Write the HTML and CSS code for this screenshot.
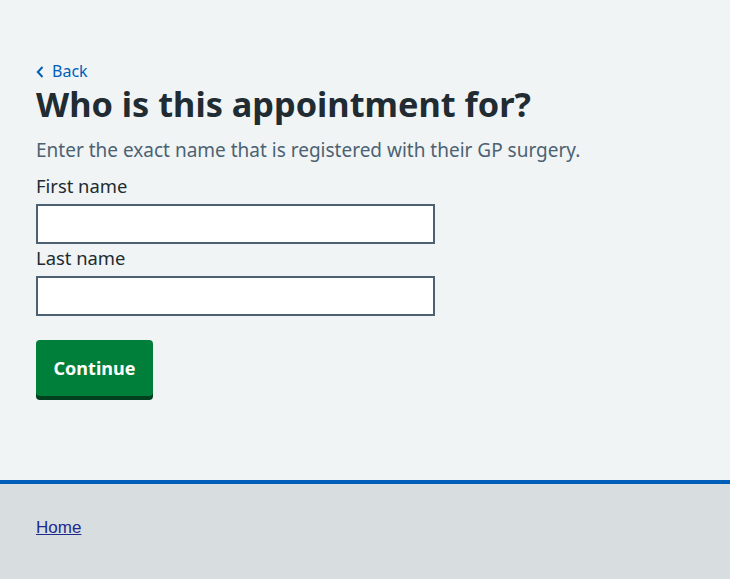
FILE: index.html
```html
<!DOCTYPE html>
<html lang="en">
<head>
<meta charset="utf-8">
<title>Who is this appointment for?</title>
<link rel="stylesheet" href="styles.css">
</head>
<body>
<div class="page">
  <main class="main">
    <a class="back-link" href="#">
      <svg class="back-icon" viewBox="0 0 8 12" width="8" height="12" aria-hidden="true"><path d="M6.5 1 L1.8 6 L6.5 11" fill="none" stroke="#005eb8" stroke-width="2"/></svg>
      <span>Back</span>
    </a>
    <h1 class="heading">Who is this appointment for?</h1>
    <p class="hint">Enter the exact name that is registered with their GP surgery.</p>
    <form class="form">
      <div class="field">
        <label class="label" for="first">First name</label>
        <input class="input" id="first" type="text">
      </div>
      <div class="field">
        <label class="label" for="last">Last name</label>
        <input class="input" id="last" type="text">
      </div>
      <button class="button" type="button">Continue</button>
    </form>
  </main>
  <footer class="footer">
    <a class="footer-link" href="#">Home</a>
  </footer>
</div>
</body>
</html>
```

FILE: styles.css
```css
html, body {
  margin: 0;
  padding: 0;
  height: 100%;
}
body {
  background: #f0f4f5;
  font-family: "Noto Sans", "Open Sans", sans-serif;
  color: #212b32;
}
.page {
  min-height: 100%;
  display: flex;
  flex-direction: column;
}
.main {
  padding: 61px 36px 0;
  height: 480px;
  box-sizing: border-box;
}
.back-link {
  display: flex;
  width: max-content;
  align-items: center;
  gap: 8px;
  color: #005eb8;
  text-decoration: none;
  font-size: 16px;
  line-height: 20px;
}
.back-icon {
  display: block;
  margin-top: 1px;
}
.heading {
  margin: 0;
  font-size: 34.3px;
  line-height: 46px;
  font-weight: 700;
}
.hint {
  margin: 9px 0 0;
  color: #4c6272;
  font-size: 19px;
  line-height: 28px;
}
.form {
  margin-top: 9px;
}
.field {
  display: flex;
  flex-direction: column;
}
.label {
  font-size: 18.4px;
  line-height: 26px;
  margin-bottom: 5px;
}
.field + .field .label {
  margin-top: 1px;
}
.input {
  width: 399px;
  height: 40px;
  box-sizing: border-box;
  border: 2px solid #4c6272;
  background: #fff;
  margin: 0;
  padding: 4px 8px;
  font: inherit;
}
.button {
  margin-top: 24px;
  width: 117px;
  height: 56px;
  background: #007f3b;
  color: #fff;
  border: 0;
  border-radius: 4px;
  box-shadow: 0 4px 0 #00401e;
  font-family: inherit;
  font-size: 18px;
  font-weight: 700;
  padding: 0;
}
.footer {
  flex: 1;
  background: #d8dde0;
  border-top: 4px solid #005eb8;
  padding: 32px 36px 0;
}
.footer-link {
  font-family: "Liberation Sans", Arial, sans-serif;
  font-size: 17px;
  color: #1f2a8e;
}
```
